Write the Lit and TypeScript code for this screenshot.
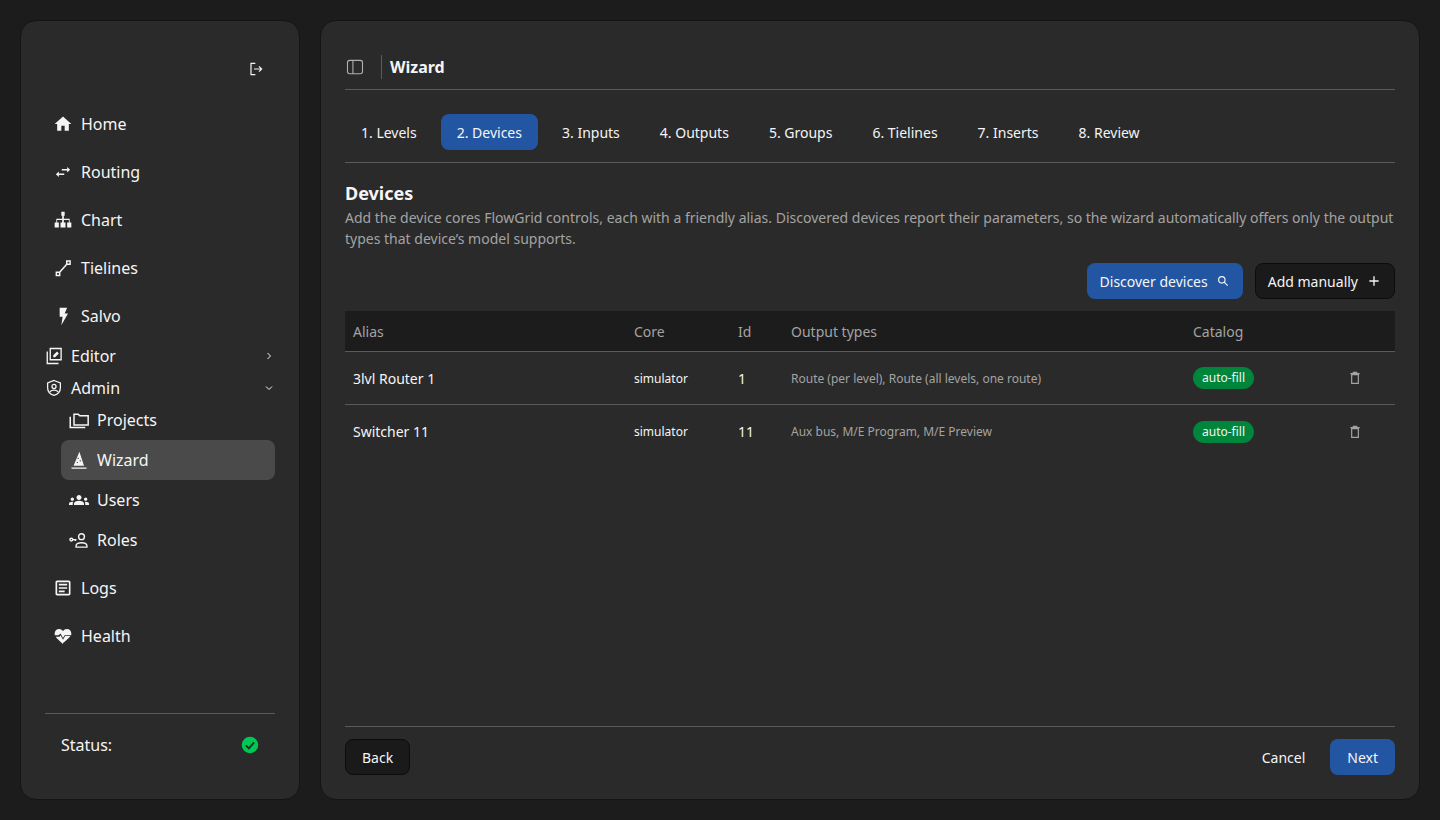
import {LitElement, css, html, svg} from 'lit';
import {customElement, state} from 'lit/decorators.js';

const icons: Record<string, unknown> = {
  home: svg`<path fill="currentColor" d="M10 20v-6h4v6h5v-8h3L12 3 2 12h3v8z"/>`,
  routing: svg`<path fill="currentColor" d="M7 11.5l-3.5 3.2L7 18v-2.3h6.5v-1.9H7zM17 6l3.5 3.3-3.5 3.2v-2.3h-6.5V8.3H17z"/>`,
  chart: svg`<path fill="currentColor" d="M10 2h4v5h-1v3.5h7V15h2v6h-5v-6h2v-3h-6v3h2v6H9v-6h2v-3H5v3h2v6H2v-6h2v-4.5h7V7h-1z"/>`,
  tielines: svg`<path fill="none" stroke="currentColor" stroke-width="1.8" d="M4 17h4v4H4zM16.500 3.500h4v4h-4zM8 17l8.500-9.500"/>`,
  salvo: svg`<path fill="currentColor" d="M8 2h9l-3 7h4l-8 14 1.500-10H8z"/>`,
  editor: svg`<path fill="none" stroke="currentColor" stroke-width="1.800" d="M7 2h14.500v15H7zM3 6v16h15"/><path fill="currentColor" d="M11 11v2.500h2.500l5-5L16 6z"/>`,
  admin: svg`<path fill="none" stroke="currentColor" stroke-width="1.700" d="M12 2l8.500 3.200v6.300c0 5-3.600 8.800-8.500 10.400-4.900-1.600-8.500-5.400-8.500-10.400V5.200z"/><circle cx="12" cy="10" r="2.700" fill="none" stroke="currentColor" stroke-width="1.700"/><path fill="none" stroke="currentColor" stroke-width="1.700" d="M6.500 17c1.500-1.600 3.400-2.200 5.500-2.200s4 .6 5.500 2.200"/>`,
  projects: svg`<path fill="none" stroke="currentColor" stroke-width="1.800" d="M6 5h5l2 2h10v11H6zM1.500 8v13h18"/>`,
  wizard: svg`<path fill="currentColor" d="M3 21h18v1.500H3zM12.500 2L18 19H5.500zM11 9l-1 1 1 1 1-1zm2.500 3l-1 1 1 1 1-1zM10 14l-1 1 1 1 1-1z" fill-rule="evenodd"/>`,
  users: svg`<path fill="currentColor" d="M12 12.750c1.630 0 3.070.39 4.240.9 1.080.48 1.760 1.560 1.760 2.730V18H6v-1.610c0-1.180.68-2.260 1.760-2.730 1.170-.52 2.610-.91 4.240-.91zM4 13c1.100 0 2-.9 2-2s-.9-2-2-2-2 .9-2 2 .9 2 2 2zm1.130 1.100c-.37-.06-.74-.1-1.130-.1-.99 0-1.930.21-2.780.58C.48 14.900 0 15.620 0 16.430V18h4.500v-1.610c0-.83.23-1.610.63-2.290zM20 13c1.100 0 2-.9 2-2s-.9-2-2-2-2 .9-2 2 .9 2 2 2zm4 3.430c0-.81-.48-1.530-1.220-1.850-.85-.37-1.790-.58-2.780-.58-.39 0-.76.04-1.130.1.4.68.63 1.460.63 2.290V18H24v-1.570zM12 6c1.660 0 3 1.340 3 3s-1.340 3-3 3-3-1.340-3-3 1.340-3 3-3z"/>`,
  roles: svg`<g fill="none" stroke="currentColor" stroke-width="1.700"><circle cx="2.800" cy="11.500" r="1.700"/><path d="M4.500 11.500H9M7.500 11.500v1.800"/><circle cx="15" cy="8" r="3.500"/><path d="M8.500 20.500v-1.500c0-2.500 3-3.800 6.500-3.800s6.500 1.300 6.500 3.800v1.500z"/></g>`,
  logs: svg`<path fill="currentColor" d="M19 5v14H5V5h14m0-2H5c-1.100 0-2 .9-2 2v14c0 1.100.9 2 2 2h14c1.100 0 2-.9 2-2V5c0-1.100-.9-2-2-2z"/><path fill="currentColor" d="M14 17H7v-2h7v2zm3-4H7v-2h10v2zm0-4H7V7h10v2z"/>`,
  health: svg`<path fill="currentColor" d="M12 21.500C7.500 17.800 4.500 15.300 3.300 13h4.500l1.200-2 3 5.500 2.500-4.500h6.200c-1.200 2.300-4.200 4.800-8.700 8.500zM2.200 11C2 10.300 2 9.700 2 9c0-3 2.300-5.300 5.300-5.300 1.900 0 3.700 1 4.700 2.500 1-1.500 2.800-2.500 4.700-2.500C19.700 3.700 22 6 22 9c0 .7 0 1.300-.2 2h-7.900L12 14.500 9 9l-2.300 2z"/>`,
  logout: svg`<path fill="none" stroke="currentColor" stroke-width="1.800" d="M11 3.500H4.500v17H11M9 12h11M16.500 8l4 4-4 4"/>`,
  panel: svg`<rect x="3" y="4" width="18" height="16" rx="2.500" fill="none" stroke="currentColor" stroke-width="1.300"/><path stroke="currentColor" stroke-width="1.300" d="M9.500 4v16"/>`,
  search: svg`<circle cx="10" cy="10" r="5.500" fill="none" stroke="currentColor" stroke-width="2"/><path stroke="currentColor" stroke-width="2" d="M14 14l6 6"/>`,
  plus: svg`<path stroke="currentColor" stroke-width="2" d="M12 5v14M5 12h14"/>`,
  trash: svg`<path fill="none" stroke="currentColor" stroke-width="1.800" d="M7 7h10v13H7zM5 5.500h14M9.500 5V3.500h5V5"/>`,
  right: svg`<path fill="none" stroke="currentColor" stroke-width="2" d="M9 6l6 6-6 6"/>`,
  down: svg`<path fill="none" stroke="currentColor" stroke-width="2" d="M6 9l6 6 6-6"/>`,
  check: svg`<circle cx="12" cy="12" r="11" fill="#00c853"/><path fill="none" stroke="#2a2a2a" stroke-width="2.600" d="M6.500 12.500l4 4 7-8"/>`,
};

const icon = (name: string, size = 20) => html`
  <svg class="icon" width=${size} height=${size} viewBox="0 0 24 24">${icons[name]}</svg>
`;

const steps = ['1. Levels', '2. Devices', '3. Inputs', '4. Outputs', '5. Groups', '6. Tielines', '7. Inserts', '8. Review'];

const devices = [
  {alias: '3lvl Router 1', core: 'simulator', id: 1, types: 'Route (per level), Route (all levels, one route)'},
  {alias: 'Switcher 11', core: 'simulator', id: 11, types: 'Aux bus, M/E Program, M/E Preview'},
];

@customElement('app-root')
export class AppRoot extends LitElement {
  @state() step = 1;

  static styles = css`
    :host {
      display: flex;
      gap: 20px;
      box-sizing: border-box;
      height: 820px;
      padding: 20px;
      background: #1c1c1c;
      color: #f5f5f5;
      font-family: 'Noto Sans', sans-serif;
      font-size: 14px;
    }

    * {
      box-sizing: border-box;
    }

    .icon {
      display: block;
      flex: none;
    }

    .sidebar,
    .main {
      display: flex;
      flex-direction: column;
      background: #2a2a2a;
      border: 1px solid #141414;
      border-radius: 16px;
    }

    .sidebar {
      width: 280px;
      padding: 24px;
    }

    .logout {
      display: flex;
      justify-content: flex-end;
      height: 55px;
      padding: 16px 11px 0 0;
    }

    .nav {
      flex: 1;
    }

    .item {
      display: flex;
      align-items: center;
      gap: 8px;
      height: 48px;
      padding-left: 8px;
      font-size: 16px;
    }

    .item.group {
      height: 32px;
      padding-left: 0;
      justify-content: flex-start;
    }

    .item.group .chevron {
      margin-left: auto;
      margin-right: 0;
    }

    .sub {
      margin: -4px 0 4px 16px;
    }

    .sub .item {
      height: 40px;
      border-radius: 8px;
    }

    .sub .item.active {
      background: #4a4a4a;
    }

    .status {
      display: flex;
      align-items: center;
      justify-content: space-between;
      height: 62px;
      padding: 0 16px;
      margin-bottom: 0;
      border-top: 1px solid #5a5a5a;
      font-size: 16px;
    }

    .main {
      flex: 1;
      padding: 24px;
    }

    .topbar {
      display: flex;
      align-items: center;
      height: 45px;
      padding-bottom: 0;
      border-bottom: 1px solid #5a5a5a;
    }

    .topbar .panel {
      color: #b0b0b0;
    }

    .topbar .divider {
      width: 1px;
      height: 24px;
      margin: 0 8px 0 16px;
      background: #5a5a5a;
    }

    .topbar h1 {
      margin: 0;
      font-size: 16px;
      font-weight: 700;
    }

    .tabs {
      display: flex;
      gap: 8px;
      padding: 24px 0 12px;
      border-bottom: 1px solid #5a5a5a;
    }

    .tab {
      display: flex;
      align-items: center;
      height: 36px;
      padding: 0 16px;
      border-radius: 8px;
    }

    .tab.active {
      background: #2356a2;
    }

    h2 {
      margin: 16px 0 0;
      font-size: 18px;
      line-height: 28px;
      font-weight: 700;
    }

    .lead {
      margin: 0;
      color: #a3a3a3;
      line-height: 21px;
    }

    .actions {
      display: flex;
      justify-content: flex-end;
      gap: 12px;
      margin-top: 14px;
    }

    .btn {
      display: flex;
      align-items: center;
      gap: 8px;
      height: 36px;
      padding: 0 12px;
      border-radius: 8px;
      border: 1px solid transparent;
      white-space: nowrap;
    }

    .btn.blue {
      background: #2356a2;
    }

    .btn.dark {
      background: #1a1a1a;
      border-color: #0c0c0c;
    }

    .table {
      margin-top: 12px;
      flex: 1;
    }

    .row {
      display: grid;
      grid-template-columns: 281px 104px 53px 402px 1fr 56px;
      align-items: center;
      height: 53px;
      border-bottom: 1px solid #5a5a5a;
    }

    .row:last-child {
      border-bottom: none;
    }

    .row.head {
      height: 41px;
      background: #1c1c1c;
      color: #a3a3a3;
    }

    .row > div {
      padding: 0 8px;
    }

    .alias {
      font-size: 14px;
    }

    .core {
      font-size: 12px;
    }

    .types {
      color: #a3a3a3;
      font-size: 12px;
    }

    .num {
      font-size: 14px;
    }

    .pill {
      display: inline-block;
      height: 22px;
      padding: 0 9px;
      border-radius: 11px;
      background: #00853c;
      font-size: 12px;
      line-height: 22px;
    }

    .del {
      color: #a3a3a3;
    }

    .footer {
      display: flex;
      align-items: center;
      justify-content: space-between;
      height: 49px;
      padding-top: 12px;
      border-top: 1px solid #5a5a5a;
    }

    .footer .right {
      display: flex;
      align-items: center;
      gap: 8px;
    }

    .footer .btn {
      padding: 0 16px;
    }
  `;

  private navItem(name: string, label: string, active = false) {
    return html`<div class="item ${active ? 'active' : ''}">${icon(name)}<span>${label}</span></div>`;
  }

  render() {
    return html`
      <aside class="sidebar">
        <div class="logout">${icon('logout', 16)}</div>
        <nav class="nav">
          ${this.navItem('home', 'Home')}
          ${this.navItem('routing', 'Routing')}
          ${this.navItem('chart', 'Chart')}
          ${this.navItem('tielines', 'Tielines')}
          ${this.navItem('salvo', 'Salvo')}
          <div class="item group">
            ${icon('editor', 18)}<span>Editor</span>
            <span class="chevron">${icon('right', 12)}</span>
          </div>
          <div class="item group">
            ${icon('admin', 18)}<span>Admin</span>
            <span class="chevron">${icon('down', 12)}</span>
          </div>
          <div class="sub">
            ${this.navItem('projects', 'Projects')}
            ${this.navItem('wizard', 'Wizard', true)}
            ${this.navItem('users', 'Users')}
            ${this.navItem('roles', 'Roles')}
          </div>
          ${this.navItem('logs', 'Logs')}
          ${this.navItem('health', 'Health')}
        </nav>
        <div class="status"><span>Status:</span>${icon('check', 18)}</div>
      </aside>

      <main class="main">
        <div class="topbar">
          <span class="panel">${icon('panel', 20)}</span>
          <span class="divider"></span>
          <h1>Wizard</h1>
        </div>

        <div class="tabs">
          ${steps.map((s, i) => html`<div class="tab ${i === this.step ? 'active' : ''}">${s}</div>`)}
        </div>

        <h2>Devices</h2>
        <p class="lead">
          Add the device cores FlowGrid controls, each with a friendly alias. Discovered devices report their parameters, so the wizard automatically offers only the output types that device’s model supports.
        </p>

        <div class="actions">
          <div class="btn blue">Discover devices ${icon('search', 14)}</div>
          <div class="btn dark">Add manually ${icon('plus', 16)}</div>
        </div>

        <div class="table">
          <div class="row head">
            <div>Alias</div><div>Core</div><div>Id</div><div>Output types</div><div>Catalog</div><div></div>
          </div>
          ${devices.map(d => html`
            <div class="row">
              <div class="alias">${d.alias}</div>
              <div class="core">${d.core}</div>
              <div class="num">${d.id}</div>
              <div class="types">${d.types}</div>
              <div><span class="pill">auto-fill</span></div>
              <div class="del">${icon('trash', 16)}</div>
            </div>
          `)}
        </div>

        <div class="footer">
          <div class="btn dark">Back</div>
          <div class="right">
            <div class="btn">Cancel</div>
            <div class="btn blue">Next</div>
          </div>
        </div>
      </main>
    `;
  }
}
